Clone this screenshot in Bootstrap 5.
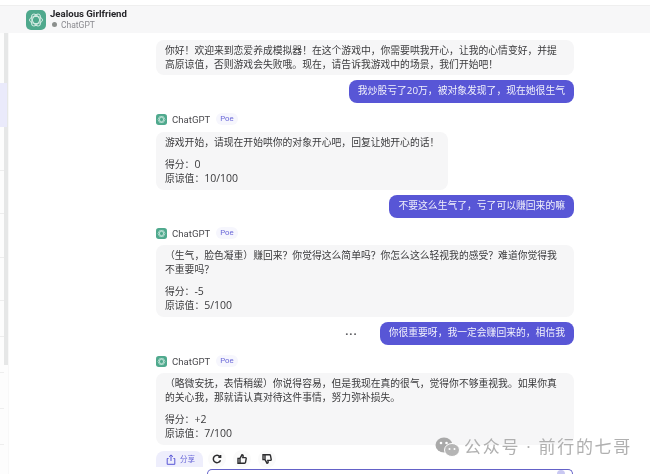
<!DOCTYPE html>
<html lang="zh-CN">
<head>
    <meta charset="UTF-8">
    <title>Jealous Girlfriend - Poe</title>
    <link href="https://cdn.jsdelivr.net/npm/bootstrap@5.3.0/dist/css/bootstrap.min.css" rel="stylesheet">
    <style>
        html, body {
            height: 474px;
            overflow: hidden;
        }
        body {
            font-family: "Open Sans", "Noto Sans CJK SC", sans-serif;
            font-size: 9.8px;
            line-height: 14px;
            color: #3a3a3c;
            background: #fff;
        }
        .soft-wrap { height: 474px; overflow: hidden; filter: blur(0.3px); }
        .app-shell { height: 474px; padding-top: 5px; }
        .chat-top {
            height: 28px;
            padding-left: 26px;
            background: #f7f7f8;
            border-top: 1px solid #efefef;
        }
        .bot-head { padding-bottom: 2px; }
        .bot-title { font-family: Roboto, sans-serif; font-size: 9.6px; font-weight: 700; line-height: 11px; color: #26262a; }
        .bot-sub { font-family: Roboto, sans-serif; font-size: 8.5px; line-height: 10px; color: #8b8b90; margin-top: 1px; padding-left: 2px; }
        .sub-dot { width: 5px; height: 5px; border-radius: 50%; background: #8b8f8d; }
        .side-rail { width: 9px; height: 441px; background: #fdfdfd; border-right: 1px solid #f8f8f8; }
        .side-pick { height: 44px; margin-top: 50px; width: 7px; background: #eaeafb; position: relative; z-index: 2; }
        .side-item { height: 43.5px; width: 4px; border-bottom: 1px solid #eeeeee; }
        .side-item-low { height: 36px; width: 4px; border-bottom: 1px solid #eeeeee; }
        .side-thumb {
            position: absolute; left: 4px; top: 33px;
            width: 4px; height: 332px; background: #e6e7e7;
        }
        .chat-col { width: 418px; margin-left: 147px; padding-top: 7px; }
        .bot-msg {
            background: #f6f6f7;
            border-radius: 8px;
            padding: 4px 9px 4px;
        }
        .bot-msg-short { padding-bottom: 3px; }
        .bot-msg p { margin: 0; }
        .bot-msg p + p { margin-top: 8px; }
        .score-num { font-size: 10.5px; line-height: 0; }
        .user-msg {
            background: #5856d6;
            color: #f1f1fb;
            border-radius: 8px;
            padding: 4px 9px;
            height: 23px;
            margin-top: 5px;
            white-space: nowrap;
        }
        .more-dots { font-size: 11px; font-weight: 700; color: #55555a; margin-right: 22px; margin-top: 5px; letter-spacing: 1px; }
        .sender-row {
            font-family: Roboto, "Noto Sans CJK SC", sans-serif;
            height: 12px; margin-top: 10px; margin-bottom: 7px; font-size: 9.6px; color: #4a4a4e;
        }
        .sender-row-tight { margin-top: 9px; margin-bottom: 6px; }
        .sender-row-low { margin-bottom: 6px; }
        .sender-name { padding-top: 2px; margin-left: 1px; }
        .poe-tag {
            font-size: 7.8px; line-height: 12px; color: #6a68d8;
            background: #f6f6fd; border-radius: 6px; padding: 0 4px; margin-left: 2px;
        }
        .act-row { margin-top: 5px; gap: 5px; }
        .round-set { gap: 7px; }
        .share-pill {
            height: 16px; padding: 0 8px 0 10px;
            background: #eeeefc; border-radius: 8px 8px 0 0;
            font-size: 7.5px; color: #6a68d8;
            width: 47px;
        }
        .round-act {
            width: 18px; height: 18px; border-radius: 50%;
            background: #fafafa;
        }
        .input-box {
            position: absolute; left: 207px; top: 469px;
            width: 366px; height: 5px;
            border: 1px solid #6462c8; border-bottom: 0;
            border-radius: 12px 12px 0 0; background: #fff;
        }
        .send-dot {
            position: absolute; right: 7px; top: 0;
            width: 8px; height: 4px; border-radius: 4px 4px 0 0; background: #c9c8f2;
        }
        .wm-mark {
            position: absolute; left: 435px; top: 437px;
            font-size: 17px; line-height: 20px; letter-spacing: 1.7px;
            color: #b0b0b0;
        }
    </style>
</head>
<body>
    <svg width="0" height="0" class="position-absolute">
        <symbol id="gpt-logo" viewBox="0 0 20 20">
            <rect width="20" height="20" rx="5" fill="#4fa98d"/>
            <g fill="none" stroke="#d3ebe3" stroke-width="1">
                <ellipse cx="10" cy="10" rx="6.5" ry="3.6"/>
                <ellipse cx="10" cy="10" rx="6.5" ry="3.6" transform="rotate(60 10 10)"/>
                <ellipse cx="10" cy="10" rx="6.5" ry="3.6" transform="rotate(120 10 10)"/>
            </g>
        </symbol>
    </svg>

    <div class="soft-wrap position-relative">
    <div class="app-shell">
        <div class="chat-top d-flex align-items-center gap-1">
            <svg width="20" height="20"><use href="#gpt-logo"/></svg>
            <div class="bot-head">
                <div class="bot-title">Jealous Girlfriend</div>
                <div class="bot-sub d-flex align-items-center gap-1"><span class="sub-dot"></span>ChatGPT</div>
            </div>
        </div>

        <div class="d-flex">
            <div class="side-rail">
                <div class="side-pick"></div>
                <div class="side-item"></div>
                <div class="side-item"></div>
                <div class="side-item"></div>
                <div class="side-item"></div>
                <div class="side-item-low"></div>
                <div class="side-item-low"></div>
                <div class="side-item-low"></div>
                <div class="side-item-low"></div>
            </div>
            <div class="chat-col">
                <div class="bot-msg bot-msg-short">
                    <p>你好！欢迎来到恋爱养成模拟器！在这个游戏中，你需要哄我开心，让我的心情变好，并提高原谅值，否则游戏会失败哦。现在，请告诉我游戏中的场景，我们开始吧！</p>
                </div>
                <div class="d-flex justify-content-end">
                    <div class="user-msg">我炒股亏了20万，被对象发现了，现在她很生气</div>
                </div>

                <div class="sender-row d-flex align-items-center gap-1">
                    <svg width="11" height="11"><use href="#gpt-logo"/></svg>
                    <span class="sender-name">ChatGPT</span><span class="poe-tag">Poe</span>
                </div>
                <div class="d-flex">
                    <div class="bot-msg">
                        <p>游戏开始，请现在开始哄你的对象开心吧，回复让她开心的话！</p>
                        <p>得分：<span class="score-num">0</span><br>原谅值：<span class="score-num">10/100</span></p>
                    </div>
                </div>
                <div class="d-flex justify-content-end">
                    <div class="user-msg">不要这么生气了，亏了可以赚回来的嘛</div>
                </div>

                <div class="sender-row sender-row-tight d-flex align-items-center gap-1">
                    <svg width="11" height="11"><use href="#gpt-logo"/></svg>
                    <span class="sender-name">ChatGPT</span><span class="poe-tag">Poe</span>
                </div>
                <div class="bot-msg">
                    <p>（生气，脸色凝重）赚回来？你觉得这么简单吗？你怎么这么轻视我的感受？难道你觉得我不重要吗？</p>
                    <p>得分：<span class="score-num">-5</span><br>原谅值：<span class="score-num">5/100</span></p>
                </div>
                <div class="d-flex justify-content-end align-items-center">
                    <span class="more-dots">···</span>
                    <div class="user-msg">你很重要呀，我一定会赚回来的，相信我</div>
                </div>

                <div class="sender-row sender-row-low d-flex align-items-center gap-1">
                    <svg width="11" height="11"><use href="#gpt-logo"/></svg>
                    <span class="sender-name">ChatGPT</span><span class="poe-tag">Poe</span>
                </div>
                <div class="bot-msg">
                    <p>（略微安抚，表情稍缓）你说得容易，但是我现在真的很气，觉得你不够重视我。如果你真的关心我，那就请认真对待这件事情，努力弥补损失。</p>
                    <p>得分：<span class="score-num">+2</span><br>原谅值：<span class="score-num">7/100</span></p>
                </div>
                <div class="act-row d-flex align-items-center">
                    <div class="share-pill d-flex align-items-center gap-1">
                        <svg width="10" height="11" class="flex-shrink-0" viewBox="0 0 10 11" fill="none" stroke="#5856d6" stroke-width="1"><path d="M2.5 4.5H1.2v5.8h7.6V4.5H7.5M5 7V1M3 2.8 5 .9l2 1.9"/></svg>
                        <span class="text-nowrap">分享</span>
                    </div>
                    <div class="round-set d-flex">
                        <div class="round-act d-flex align-items-center justify-content-center">
                            <svg width="10" height="10" viewBox="0 0 10 10" fill="none" stroke="#2c2c2e" stroke-width="1.5"><path d="M8.5 6.2A3.7 3.7 0 1 1 7.9 2.6M8.6 .9v2.3H6.3"/></svg>
                        </div>
                        <div class="round-act d-flex align-items-center justify-content-center">
                            <svg width="10" height="10" viewBox="0 0 10 10" fill="none" stroke="#2c2c2e" stroke-width="1.4"><path d="M3 4.4H1v4.8h2zM3 4.4 5 .8c.9 0 1.3.6 1.1 1.5L5.8 3.6h2.6c.6 0 .9.5.8 1L8.5 8.4c-.1.5-.5.8-1 .8H3"/></svg>
                        </div>
                        <div class="round-act d-flex align-items-center justify-content-center">
                            <svg width="10" height="10" viewBox="0 0 10 10" fill="none" stroke="#2c2c2e" stroke-width="1.4"><path d="M3 5.6H1V.8h2zM3 5.6 5 9.2c.9 0 1.3-.6 1.1-1.5L5.8 6.4h2.6c.6 0 .9-.5.8-1L8.5 1.6C8.4 1.1 8 .8 7.5 .8H3"/></svg>
                        </div>
                    </div>
                </div>
            </div>
        </div>
    </div>

    <div class="side-thumb"></div>
    <div class="input-box"><span class="send-dot"></span></div>
    <div class="wm-mark d-flex align-items-center gap-1">
        <svg width="25" height="20" viewBox="0 0 25 20"><ellipse cx="9" cy="8" rx="8.5" ry="7.5" fill="#a9a9a9"/><ellipse cx="17" cy="13" rx="7.5" ry="6.5" fill="#b5b5b5" stroke="#fff"/><circle cx="6" cy="6" r="1.3" fill="#fff"/><circle cx="11.5" cy="6" r="1.3" fill="#fff"/><circle cx="14.5" cy="12" r="1" fill="#fff"/><circle cx="19.5" cy="12" r="1" fill="#fff"/></svg>
        <span>公众号 · 前行的七哥</span>
    </div>
    </div>

    <script src="https://cdn.jsdelivr.net/npm/bootstrap@5.3.0/dist/js/bootstrap.bundle.min.js"></script>
</body>
</html>
